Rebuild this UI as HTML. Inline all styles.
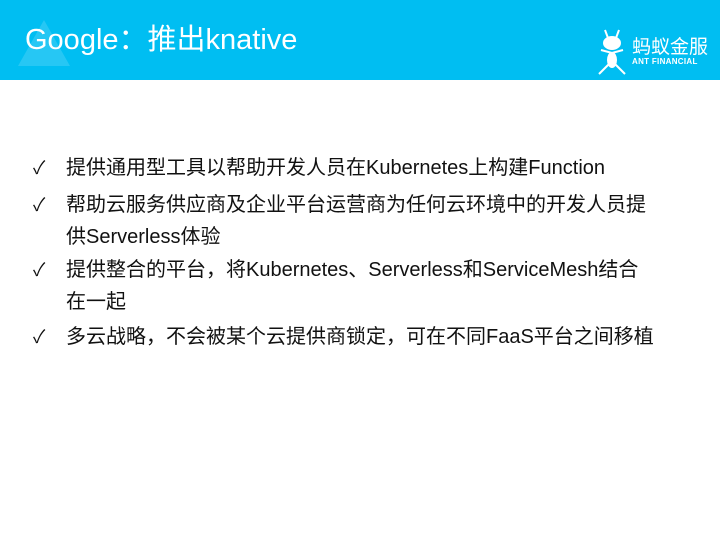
<!DOCTYPE html>
<html><head><meta charset="utf-8"><style>
body{margin:0;width:720px;height:540px;background:#fff;overflow:hidden;position:relative;font-family:"Liberation Sans","Noto Sans CJK SC",sans-serif}
.hd{position:absolute;left:0;top:0;width:720px;height:80px;background:#00bef2}
.tri{position:absolute;left:18px;top:20px;width:0;height:0;border-left:26px solid transparent;border-right:26px solid transparent;border-bottom:46px solid rgba(255,255,255,0.15)}
.tt{position:absolute;left:25px;top:22px;color:#fff;font-size:29px;line-height:36px}
.logo{position:absolute;left:597px;top:28px;color:#fff}
.li{position:absolute;left:0;font-size:20px;color:#111;line-height:33px}
.ck{position:absolute;left:33px;font-size:18px}
.tx{position:absolute;left:66px;white-space:nowrap}
</style></head><body>
<div class="hd"><div class="tri"></div><div class="tt">Google：推出knative</div>
<div class="logo">
<svg width="30" height="50" viewBox="0 0 30 50" style="position:absolute;left:0;top:0" fill="none" stroke="#fff" stroke-width="2">
<line x1="8" y1="2" x2="11" y2="10"/><line x1="22" y1="2" x2="19" y2="10"/>
<ellipse cx="15" cy="15" rx="8" ry="6" fill="#fff"/>
<ellipse cx="15" cy="32" rx="4" ry="7" fill="#fff"/>
<path d="M4 22 L15 25 L26 22"/><path d="M2 46 L8 40 L12 36"/><path d="M28 46 L22 40 L18 36"/>
</svg>
<div style="position:absolute;left:35px;top:4px;font-size:19px;white-space:nowrap">蚂蚁金服</div>
<div style="position:absolute;left:35px;top:29px;font-size:8px;font-weight:bold;white-space:nowrap;letter-spacing:0.3px">ANT FINANCIAL</div>
</div></div>
<div class="li" style="top:152px"><span class="ck">✓</span><span class="tx">提供通用型工具以帮助开发人员在Kubernetes上构建Function</span></div>
<div class="li" style="top:189px"><span class="ck">✓</span><span class="tx">帮助云服务供应商及企业平台运营商为任何云环境中的开发人员提</span></div>
<div class="li" style="top:221px"><span class="tx">供Serverless体验</span></div>
<div class="li" style="top:254px"><span class="ck">✓</span><span class="tx">提供整合的平台，将Kubernetes、Serverless和ServiceMesh结合</span></div>
<div class="li" style="top:286px"><span class="tx">在一起</span></div>
<div class="li" style="top:321px"><span class="ck">✓</span><span class="tx">多云战略，不会被某个云提供商锁定，可在不同FaaS平台之间移植</span></div>
</body></html>
